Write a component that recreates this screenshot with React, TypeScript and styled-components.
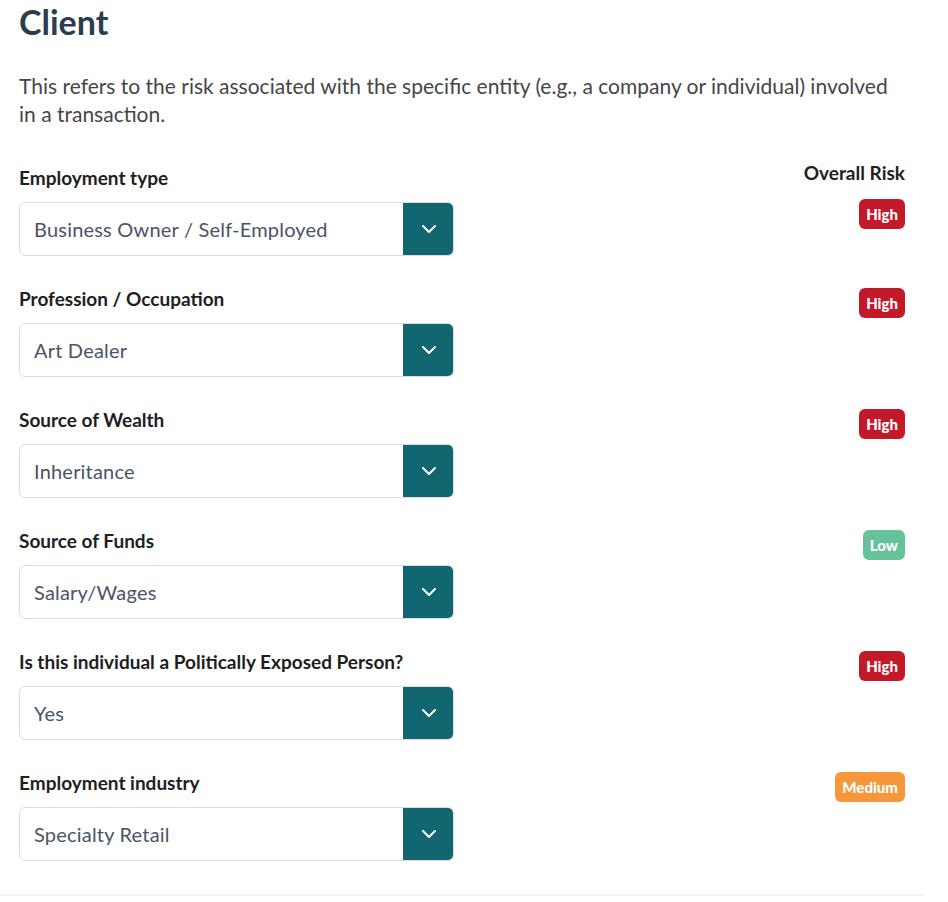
import React from "react";
import styled, { createGlobalStyle } from "styled-components";

const GlobalStyle = createGlobalStyle`
  html, body { margin: 0; padding: 0; background: #ffffff; }
  body { font-family: Lato, "Open Sans", sans-serif; -webkit-font-smoothing: antialiased; }
  * { box-sizing: border-box; }
`;

const Page = styled.div`
  width: 925px;
`;

const Section = styled.section`
  padding: 2px 20px 0 19px;
`;

const Title = styled.h1`
  margin: 0;
  font-family: Lato, sans-serif;
  font-weight: 700;
  font-size: 34px;
  line-height: 1.2;
  color: #2b3d4f;
`;

const Intro = styled.p`
  margin: 29px 0 0;
  font-size: 21px;
  line-height: 28px;
  color: #454545;
`;

const Rows = styled.div`
  margin-top: 34px;
  display: flex;
  flex-direction: column;
  gap: 32px;
`;

const Row = styled.div`
  display: flex;
  justify-content: space-between;
  align-items: flex-start;
`;

const Field = styled.div<{ $first?: boolean }>`
  width: 435px;
  display: flex;
  flex-direction: column;
  gap: 13px;
  padding-top: ${(p) => (p.$first ? "5px" : "0")};
`;

const Label = styled.label`
  font-weight: 700;
  font-size: 19px;
  line-height: 22px;
  color: #1e1e1e;
`;

const Select = styled.div`
  display: flex;
  height: 54px;
  border: 1px solid #dcdde0;
  border-radius: 6px;
  overflow: hidden;
`;

const Value = styled.div`
  flex: 1;
  display: flex;
  align-items: center;
  padding-left: 14px;
  font-family: Lato, "Open Sans", sans-serif;
  font-size: 20px;
  letter-spacing: 0.2px;
  color: #4a5466;
`;

const Toggle = styled.div`
  width: 51px;
  margin: -1px -1px -1px 0;
  background: #12666f;
  border-radius: 0 6px 6px 0;
  display: flex;
  align-items: center;
  justify-content: center;
`;

const RiskCol = styled.div`
  display: flex;
  flex-direction: column;
  align-items: flex-end;
  gap: 15px;
`;

const RiskHeader = styled.div`
  font-weight: 700;
  font-size: 19px;
  line-height: 22px;
  color: #1e1e1e;
`;

const badgeColors: Record<string, string> = {
  High: "#c31a2a",
  Low: "#66c29a",
  Medium: "#f7963a",
};

const Badge = styled.span<{ $level: string }>`
  display: inline-flex;
  align-items: center;
  justify-content: center;
  height: 30px;
  padding: 0 7px;
  border-radius: 6px;
  background: ${(p) => badgeColors[p.$level]};
  color: #ffffff;
  font-weight: 900;
  font-size: 15px;
`;

const Divider = styled.div`
  margin-top: 33px;
  height: 2px;
  background: #f3f3f3;
`;

const Chevron = () => (
  <svg width="16" height="10" viewBox="0 0 16 10" fill="none">
    <path d="M2 2l6 6 6-6" stroke="#ffffff" strokeWidth="2" strokeLinecap="round" strokeLinejoin="round" />
  </svg>
);

const fields = [
  { label: "Employment type", value: "Business Owner / Self-Employed", risk: "High" },
  { label: "Profession / Occupation", value: "Art Dealer", risk: "High" },
  { label: "Source of Wealth", value: "Inheritance", risk: "High" },
  { label: "Source of Funds", value: "Salary/Wages", risk: "Low" },
  { label: "Is this individual a Politically Exposed Person?", value: "Yes", risk: "High" },
  { label: "Employment industry", value: "Specialty Retail", risk: "Medium" },
];

export default function App() {
  return (
    <Page>
      <GlobalStyle />
      <Section>
        <Title>Client</Title>
        <Intro>
          This refers to the risk associated with the specific entity (e.g., a company or individual) involved in a
          transaction.
        </Intro>
        <Rows>
          {fields.map((f, i) => (
            <Row key={f.label}>
              <Field $first={i === 0}>
                <Label>{f.label}</Label>
                <Select>
                  <Value>{f.value}</Value>
                  <Toggle>
                    <Chevron />
                  </Toggle>
                </Select>
              </Field>
              <RiskCol>
                {i === 0 && <RiskHeader>Overall Risk</RiskHeader>}
                <Badge $level={f.risk}>{f.risk}</Badge>
              </RiskCol>
            </Row>
          ))}
        </Rows>
      </Section>
      <Divider />
    </Page>
  );
}
